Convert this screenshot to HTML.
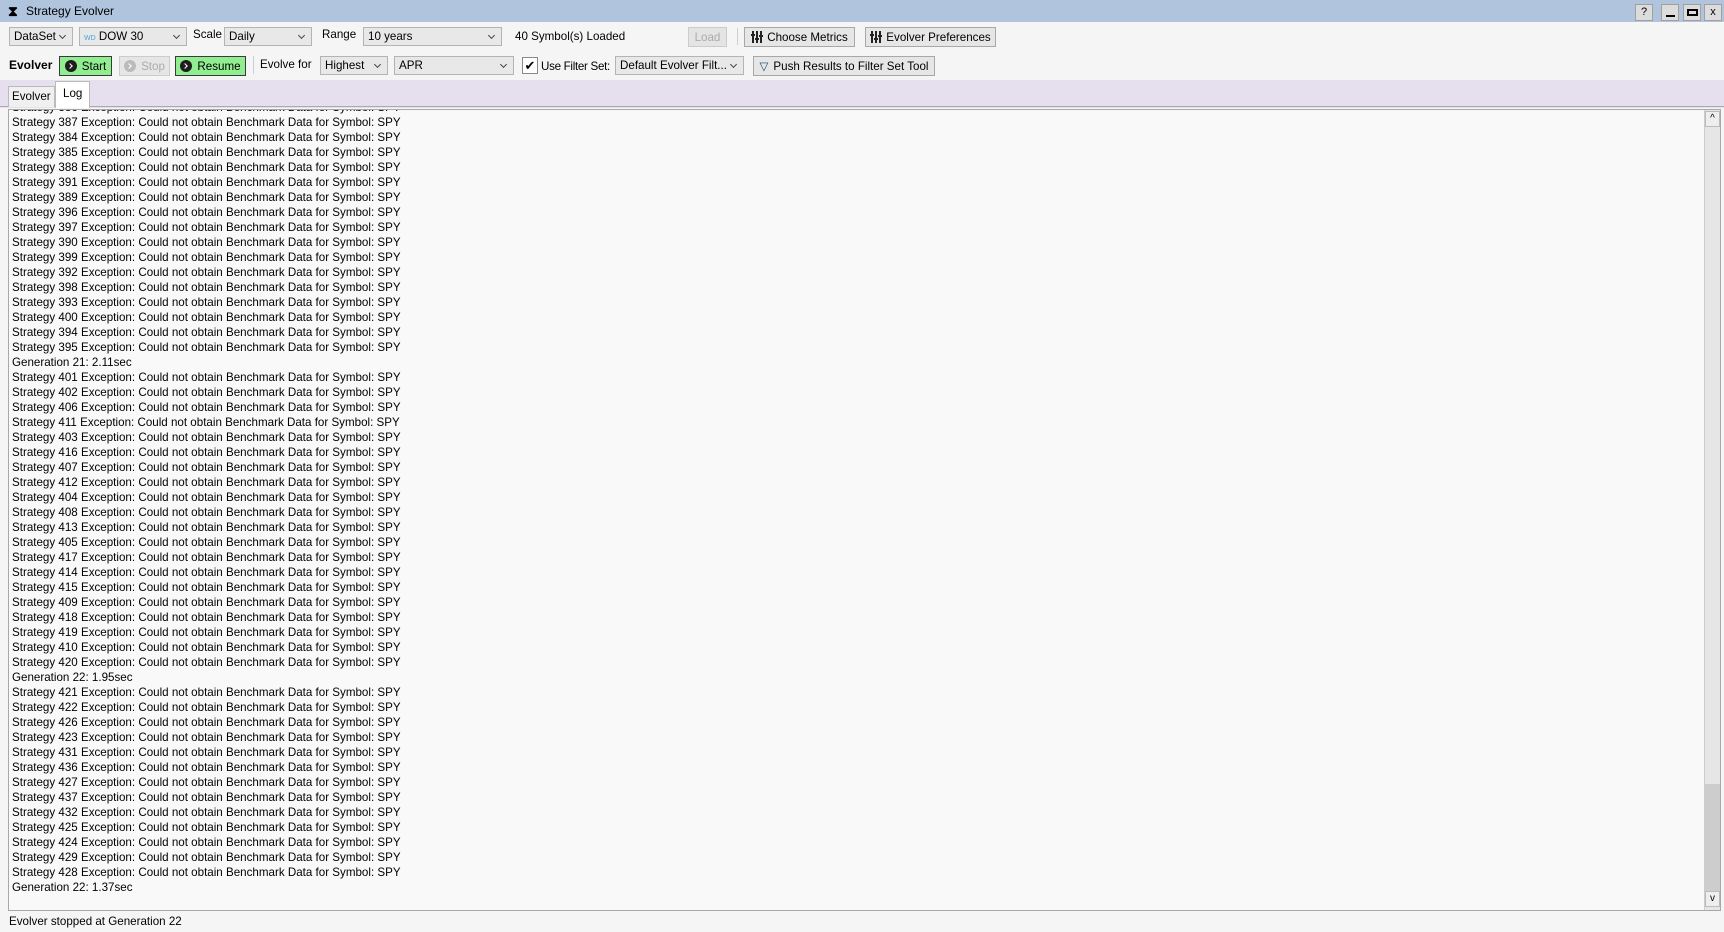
<!DOCTYPE html>
<html><head><meta charset="utf-8"><style>
*{box-sizing:border-box;margin:0;padding:0}
body{width:1724px;height:932px;background:#f5f5f5;font-family:"Liberation Sans",sans-serif;font-size:11.6px;color:#000;position:relative;overflow:hidden}
.a{position:absolute;white-space:nowrap}
.title{left:0;top:0;width:1724px;height:22px;background:#b0c4de}
.combo{position:absolute;height:19px;border:1px solid #b4b4b4;background:#e8e8e8;padding:2px 4px;line-height:13px;white-space:nowrap;overflow:hidden}
.combo:after{content:"";position:absolute;right:7px;top:5px;width:4px;height:4px;border-right:1px solid #444;border-bottom:1px solid #444;transform:rotate(45deg)}
.btn{position:absolute;height:20px;border:1px solid #a8a8a8;background:#e6e6e6;display:flex;align-items:center;justify-content:center;white-space:nowrap}
.g{background:#90ee90;border:1px solid #3a3a3a}
.dot{display:inline-block;width:12px;height:12px;border-radius:6px;background:#1e1e1e;margin-right:5px;position:relative;flex:none}
.dot:after{content:"";position:absolute;left:3px;top:3.5px;width:3px;height:3px;border-right:1.5px solid #fff;border-top:1.5px solid #fff;transform:rotate(45deg)}
.tb{position:absolute;top:4px;width:18px;height:17px;border:1px solid #a0a0a0;background:#dcdcdc;text-align:center;font-size:11px;line-height:15px}
.ico{display:inline-block;width:11px;height:12px;margin-right:5px;position:relative;flex:none}
.ico i{position:absolute;top:0;width:1.5px;height:12px;background:#222}
.ico b{position:absolute;width:4px;height:2px;background:#222}
#log{position:absolute;left:8px;top:109px;width:1713px;height:802px;border:1px solid #a8a8a8;background:#f9f9f9;overflow:hidden}
#log div{height:15px;line-height:15px;padding-left:3px;font-size:11.6px;white-space:nowrap}
</style></head><body>
<div class="a title"></div>
<div class="a" style="left:8px;top:3px;font-size:14px;font-weight:bold">⧗</div>
<div class="a" style="left:26px;top:4px;font-size:12px">Strategy Evolver</div>
<div class="tb" style="left:1635px">?</div>
<div class="tb" style="left:1661px"><div style="position:absolute;left:4px;top:10px;width:9px;height:2px;background:#000"></div></div>
<div class="tb" style="left:1683px"><div style="position:absolute;left:3px;top:4px;width:11px;height:7px;border:2px solid #000"></div></div>
<div class="tb" style="left:1704px">x</div>

<div class="combo" style="left:9px;top:27px;width:64px">DataSet</div>
<div class="combo" style="left:79px;top:27px;width:108px"><span style="color:#4aa3df;font-size:7px">WD</span> DOW 30</div>
<div class="a" style="left:193px;top:28px">Scale</div>
<div class="combo" style="left:224px;top:27px;width:88px">Daily</div>
<div class="a" style="left:322px;top:28px">Range</div>
<div class="combo" style="left:363px;top:27px;width:139px">10 years</div>
<div class="a" style="left:515px;top:30px">40 Symbol(s) Loaded</div>
<div class="btn" style="left:688px;top:27px;width:39px;color:#aaa;background:#e4e4e4;border-color:#ccc">Load</div>
<div class="a" style="left:737px;top:28px;width:1px;height:17px;background:#c8d0dc"></div>
<div class="btn" style="left:744px;top:27px;width:111px"><span class="ico"><i style="left:1px"></i><i style="left:5px"></i><i style="left:9px"></i><b style="left:0;top:3px"></b><b style="left:4px;top:7px"></b><b style="left:8px;top:4px"></b></span>Choose Metrics</div>
<div class="btn" style="left:865px;top:27px;width:131px"><span class="ico"><i style="left:1px"></i><i style="left:5px"></i><i style="left:9px"></i><b style="left:0;top:3px"></b><b style="left:4px;top:7px"></b><b style="left:8px;top:4px"></b></span>Evolver Preferences</div>

<div class="a" style="left:9px;top:58px;font-weight:bold;font-size:12px">Evolver</div>
<div class="btn g" style="left:59px;top:56px;width:53px"><span class="dot"></span>Start</div>
<div class="btn" style="left:119px;top:56px;width:51px;color:#aaa;border-color:#ccc"><span class="dot" style="background:#bbb"></span>Stop</div>
<div class="btn g" style="left:175px;top:56px;width:71px"><span class="dot"></span>Resume</div>
<div class="a" style="left:253px;top:56px;width:1px;height:18px;background:#c8d0dc"></div>
<div class="a" style="left:260px;top:58px">Evolve for</div>
<div class="combo" style="left:320px;top:56px;width:68px">Highest</div>
<div class="combo" style="left:394px;top:56px;width:120px">APR</div>
<div class="a" style="left:522px;top:57px;width:16px;height:17px;border:1px solid #888;background:#fff;text-align:center;font-size:13px;line-height:15px">✔</div>
<div class="a" style="left:541px;top:60px;letter-spacing:-0.3px">Use Filter Set:</div>
<div class="combo" style="left:615px;top:56px;width:129px;padding-right:16px">Default Evolver Filt...</div>
<div class="btn" style="left:753px;top:56px;width:182px"><span style="color:#246;margin-right:5px">▽</span>Push Results to Filter Set Tool</div>

<div class="a" style="left:0;top:80px;width:1724px;height:28px;background:#e6dfee"></div>
<div class="a" style="left:0;top:106px;width:1724px;height:1px;background:#aaa"></div>
<div class="a" style="left:8px;top:86px;width:47px;height:21px;border:1px solid #bbb;border-bottom:none;background:#f0f0f0;padding:3px 3px">Evolver</div>
<div class="a" style="left:55px;top:81px;width:35px;height:27px;border:1px solid #bbb;border-bottom:none;background:#fff;padding:5px 7px">Log</div>

<div id="log">
<div style="margin-top:-10px">Strategy 386 Exception: Could not obtain Benchmark Data for Symbol: SPY</div>
<div>Strategy 387 Exception: Could not obtain Benchmark Data for Symbol: SPY</div>
<div>Strategy 384 Exception: Could not obtain Benchmark Data for Symbol: SPY</div>
<div>Strategy 385 Exception: Could not obtain Benchmark Data for Symbol: SPY</div>
<div>Strategy 388 Exception: Could not obtain Benchmark Data for Symbol: SPY</div>
<div>Strategy 391 Exception: Could not obtain Benchmark Data for Symbol: SPY</div>
<div>Strategy 389 Exception: Could not obtain Benchmark Data for Symbol: SPY</div>
<div>Strategy 396 Exception: Could not obtain Benchmark Data for Symbol: SPY</div>
<div>Strategy 397 Exception: Could not obtain Benchmark Data for Symbol: SPY</div>
<div>Strategy 390 Exception: Could not obtain Benchmark Data for Symbol: SPY</div>
<div>Strategy 399 Exception: Could not obtain Benchmark Data for Symbol: SPY</div>
<div>Strategy 392 Exception: Could not obtain Benchmark Data for Symbol: SPY</div>
<div>Strategy 398 Exception: Could not obtain Benchmark Data for Symbol: SPY</div>
<div>Strategy 393 Exception: Could not obtain Benchmark Data for Symbol: SPY</div>
<div>Strategy 400 Exception: Could not obtain Benchmark Data for Symbol: SPY</div>
<div>Strategy 394 Exception: Could not obtain Benchmark Data for Symbol: SPY</div>
<div>Strategy 395 Exception: Could not obtain Benchmark Data for Symbol: SPY</div>
<div>Generation 21: 2.11sec</div>
<div>Strategy 401 Exception: Could not obtain Benchmark Data for Symbol: SPY</div>
<div>Strategy 402 Exception: Could not obtain Benchmark Data for Symbol: SPY</div>
<div>Strategy 406 Exception: Could not obtain Benchmark Data for Symbol: SPY</div>
<div>Strategy 411 Exception: Could not obtain Benchmark Data for Symbol: SPY</div>
<div>Strategy 403 Exception: Could not obtain Benchmark Data for Symbol: SPY</div>
<div>Strategy 416 Exception: Could not obtain Benchmark Data for Symbol: SPY</div>
<div>Strategy 407 Exception: Could not obtain Benchmark Data for Symbol: SPY</div>
<div>Strategy 412 Exception: Could not obtain Benchmark Data for Symbol: SPY</div>
<div>Strategy 404 Exception: Could not obtain Benchmark Data for Symbol: SPY</div>
<div>Strategy 408 Exception: Could not obtain Benchmark Data for Symbol: SPY</div>
<div>Strategy 413 Exception: Could not obtain Benchmark Data for Symbol: SPY</div>
<div>Strategy 405 Exception: Could not obtain Benchmark Data for Symbol: SPY</div>
<div>Strategy 417 Exception: Could not obtain Benchmark Data for Symbol: SPY</div>
<div>Strategy 414 Exception: Could not obtain Benchmark Data for Symbol: SPY</div>
<div>Strategy 415 Exception: Could not obtain Benchmark Data for Symbol: SPY</div>
<div>Strategy 409 Exception: Could not obtain Benchmark Data for Symbol: SPY</div>
<div>Strategy 418 Exception: Could not obtain Benchmark Data for Symbol: SPY</div>
<div>Strategy 419 Exception: Could not obtain Benchmark Data for Symbol: SPY</div>
<div>Strategy 410 Exception: Could not obtain Benchmark Data for Symbol: SPY</div>
<div>Strategy 420 Exception: Could not obtain Benchmark Data for Symbol: SPY</div>
<div>Generation 22: 1.95sec</div>
<div>Strategy 421 Exception: Could not obtain Benchmark Data for Symbol: SPY</div>
<div>Strategy 422 Exception: Could not obtain Benchmark Data for Symbol: SPY</div>
<div>Strategy 426 Exception: Could not obtain Benchmark Data for Symbol: SPY</div>
<div>Strategy 423 Exception: Could not obtain Benchmark Data for Symbol: SPY</div>
<div>Strategy 431 Exception: Could not obtain Benchmark Data for Symbol: SPY</div>
<div>Strategy 436 Exception: Could not obtain Benchmark Data for Symbol: SPY</div>
<div>Strategy 427 Exception: Could not obtain Benchmark Data for Symbol: SPY</div>
<div>Strategy 437 Exception: Could not obtain Benchmark Data for Symbol: SPY</div>
<div>Strategy 432 Exception: Could not obtain Benchmark Data for Symbol: SPY</div>
<div>Strategy 425 Exception: Could not obtain Benchmark Data for Symbol: SPY</div>
<div>Strategy 424 Exception: Could not obtain Benchmark Data for Symbol: SPY</div>
<div>Strategy 429 Exception: Could not obtain Benchmark Data for Symbol: SPY</div>
<div>Strategy 428 Exception: Could not obtain Benchmark Data for Symbol: SPY</div>
<div>Generation 22: 1.37sec</div>
</div>
<div class="a" style="left:1704px;top:110px;width:16px;height:800px;background:#e6e6e6;border-left:1px solid #ccc"></div>
<div class="a" style="left:1705px;top:111px;width:15px;height:16px;border:1px solid #bbb;background:#eee;text-align:center;font-size:10px;line-height:14px">^</div>
<div class="a" style="left:1705px;top:784px;width:15px;height:107px;background:#cdcdcd"></div>
<div class="a" style="left:1705px;top:891px;width:15px;height:16px;border:1px solid #bbb;background:#eee;text-align:center;font-size:10px;line-height:14px">v</div>
<div class="a" style="left:9px;top:915px">Evolver stopped at Generation 22</div>
</body></html>
